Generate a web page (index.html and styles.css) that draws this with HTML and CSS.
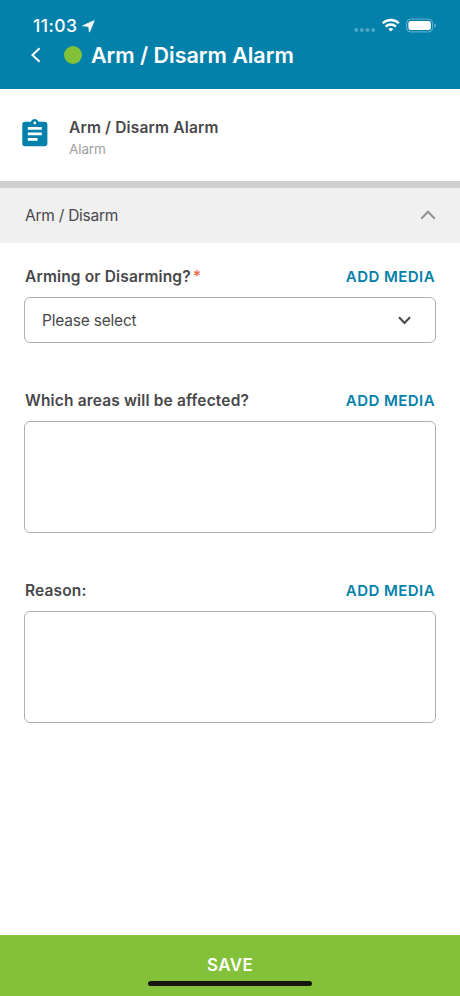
FILE: index.html
```html
<!DOCTYPE html>
<html lang="en">
<head>
<meta charset="utf-8">
<title>Arm / Disarm Alarm</title>
<link rel="stylesheet" href="styles.css">
</head>
<body>
<div class="screen">
  <header class="header">
    <div class="status">
      <span class="time">11:03</span>
      <svg class="location" width="13" height="13" viewBox="0 0 13 13"><path d="M12.2.7 7.4 12.1 6.8 6.4.7 5.8Z" fill="#fff" stroke="#fff" stroke-width=".9" stroke-linejoin="round"/></svg>
      <svg class="indicators" width="84" height="16" viewBox="0 0 84 16">
        <g fill="#4da6c6"><circle cx="3.2" cy="12" r="2"/><circle cx="8.9" cy="12" r="2"/><circle cx="14.5" cy="12" r="2"/><circle cx="20.2" cy="12" r="2"/></g>
        <g fill="none" stroke="#fff" stroke-width="2.3"><path d="M29.7 5.3a11.6 11.6 0 0 1 16.2 0"/><path d="M32.7 8.6a7.3 7.3 0 0 1 10.2 0"/></g>
        <path d="M37.8 13.6 35.3 11.1a3.6 3.6 0 0 1 5 0Z" fill="#fff"/>
        <rect x="53.6" y="1.1" width="26" height="12.8" rx="4" fill="none" stroke="#69b5cf" stroke-width="1"/>
        <rect x="55.4" y="2.9" width="22.5" height="9.2" rx="2.3" fill="#fff"/>
        <path d="M81.2 5.3q1.7.8 1.7 2.2t-1.7 2.2Z" fill="#69b5cf"/>
      </svg>
    </div>
    <div class="nav">
      <svg class="back" width="11" height="16" viewBox="0 0 11 16"><path d="M9.6 1.2 2.4 8l7.2 6.8" fill="none" stroke="#fff" stroke-width="1.9"/></svg>
      <span class="dot"></span>
      <h1 class="title">Arm / Disarm Alarm</h1>
    </div>
  </header>

  <section class="summary">
    <svg class="clipboard" width="26" height="28" viewBox="0 0 26 28">
      <path fill="#0381aa" d="M3 2.8h6a4 4 0 0 1 7.6 0H22.7a2.7 2.7 0 0 1 2.7 2.7v19a2.7 2.7 0 0 1-2.7 2.7H3a2.7 2.7 0 0 1-2.7-2.7v-19A2.7 2.7 0 0 1 3 2.8Z"/>
      <circle cx="12.8" cy="3.9" r="1.4" fill="#fff"/>
      <path d="M5.8 9.3h14M5.8 14.8h14M5.8 20.4h9.7" stroke="#fff" stroke-width="2.7"/>
    </svg>
    <div class="summary-text">
      <h2 class="name">Arm / Disarm Alarm</h2>
      <p class="kind">Alarm</p>
    </div>
  </section>

  <div class="section-bar">
    <span class="section-name">Arm / Disarm</span>
    <svg width="16" height="10" viewBox="0 0 16 10"><path d="m1.2 8.7 6.8-7 6.8 7" fill="none" stroke="#929292" stroke-width="2"/></svg>
  </div>

  <main class="form">
    <div class="field">
      <div class="field-head"><span class="label">Arming or Disarming?</span><span class="required">*</span><span class="add">ADD MEDIA</span></div>
      <div class="box select">
        <span class="placeholder">Please select</span>
        <svg width="13" height="9" viewBox="0 0 13 9"><path d="m1 1.3 5.5 5.6L12 1.3" fill="none" stroke="#4b4b4b" stroke-width="2.2"/></svg>
      </div>
    </div>
    <div class="field">
      <div class="field-head"><span class="label">Which areas will be affected?</span><span class="add">ADD MEDIA</span></div>
      <div class="box area"></div>
    </div>
    <div class="field">
      <div class="field-head"><span class="label">Reason:</span><span class="add">ADD MEDIA</span></div>
      <div class="box area"></div>
    </div>
  </main>

  <footer class="save">
    <span class="save-text">SAVE</span>
    <span class="home"></span>
  </footer>
</div>
</body>
</html>
```

FILE: styles.css
```css
* { box-sizing: border-box; margin: 0; padding: 0; }
body { font-family: Inter, "Liberation Sans", sans-serif; color: #48484a; background: #fff; }
svg { display: block; flex: none; }
span, h1, h2, p { white-space: nowrap; }
.screen { width: 460px; height: 996px; display: flex; flex-direction: column; overflow: hidden; }

.header { height: 89px; background: #0381aa; color: #fff; padding-top: 16px; }
.status { display: flex; align-items: center; height: 20px; padding: 0 23px 0 33px; }
.time { font-size: 17.5px; font-weight: 500; line-height: 20px; width: 45px; letter-spacing: .45px; }
.location { margin: 0 0 0 4px; }
.indicators { margin-left: auto; }
.nav { display: flex; align-items: center; height: 28px; margin-top: 5px; padding-left: 30px; }
.dot { width: 18px; height: 18px; border-radius: 50%; background: #82c13a; margin: 0 9px 0 23px; }
.title { font-size: 21.5px; line-height: 28px; font-weight: 600; letter-spacing: -.03px; }

.summary { height: 92px; display: flex; padding: 30px 0 0 22px; }
.summary-text { margin-left: 21px; }
.name { font-size: 15.5px; line-height: 18px; font-weight: 600; letter-spacing: .17px; }
.kind { font-size: 13.5px; line-height: 18px; margin-top: 3px; color: #a0a0a0; letter-spacing: -.1px; }

.section-bar { height: 62px; border-top: 7px solid #d0d0d0; background: #f0f0f0; display: flex; align-items: center; justify-content: space-between; padding: 0 25px 1px; }
.section-bar svg { margin-right: -1px; }
.section-name { font-size: 15.5px; letter-spacing: -.25px; }

.form { flex: 1; padding: 23px 24px 0; }
.field { margin-bottom: 47px; }
.field-head { display: flex; align-items: center; height: 20px; margin-bottom: 11px; padding: 0 1px; }
.label { font-size: 15.5px; font-weight: 600; letter-spacing: .15px; }
.required { color: #ed6a50; font-size: 15.5px; font-weight: 600; margin-left: 2px; }
.add { margin-left: auto; color: #0381aa; font-size: 15px; font-weight: 600; letter-spacing: .45px; }
.box { border: 1px solid #aeaeb0; border-radius: 6px; width: 412px; }
.select { height: 46px; display: flex; align-items: center; justify-content: space-between; padding: 0 24px 0 17px; }
.placeholder { font-size: 15.5px; letter-spacing: -.2px; }
.area { height: 112px; }

.save { height: 61px; background: #84c13a; display: flex; flex-direction: column; align-items: center; padding-top: 19px; }
.save-text { color: #fff; font-size: 17px; line-height: 22px; font-weight: 600; letter-spacing: .4px; }
.home { width: 164px; height: 5px; border-radius: 3px; background: #15150d; margin-top: 5px; }
```
